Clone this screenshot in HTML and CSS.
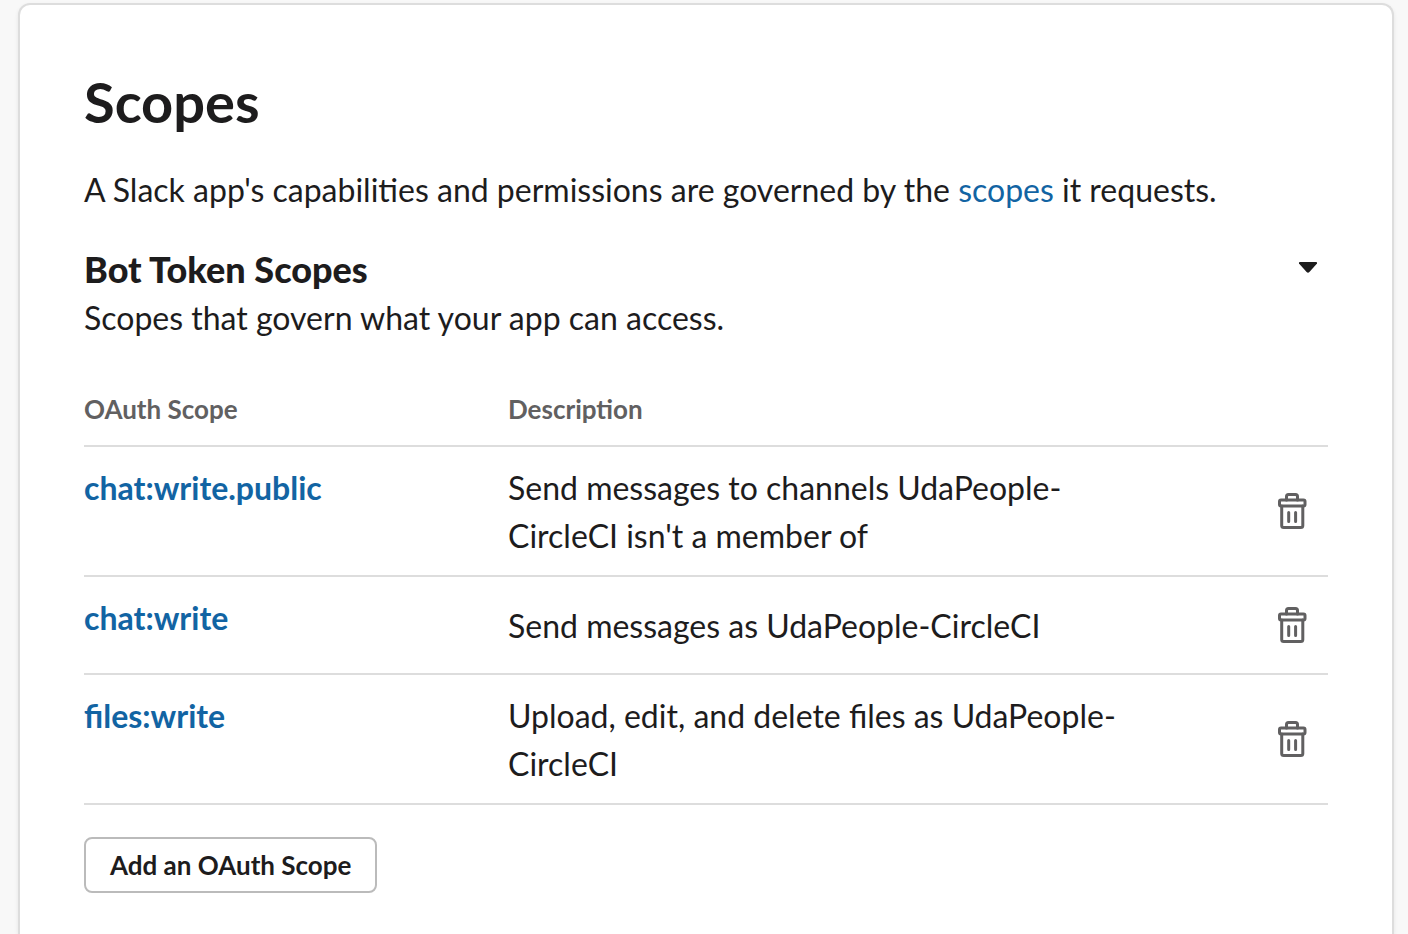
FILE: index.html
```html
<!DOCTYPE html>
<html lang="en">
<head>
<meta charset="utf-8">
<title>Scopes</title>
<link rel="stylesheet" href="styles.css">
</head>
<body>
<svg class="sprite" aria-hidden="true">
  <symbol id="trash" viewBox="0 0 32 38">
    <g fill="none" stroke="currentColor" stroke-width="3" stroke-linejoin="round" stroke-linecap="round">
      <path d="M10.500 8V4.500a2 2 0 0 1 2-2h7a2 2 0 0 1 2 2V8"/>
      <rect x="3.500" y="8" width="25.500" height="6" rx="1.500"/>
      <path d="M5.700 14V33.500a2 2 0 0 0 2 2H24.800a2 2 0 0 0 2-2V14"/>
      <path d="M12.700 20.500v9M19.600 20.500v9"/>
    </g>
  </symbol>
</svg>
<main class="card">
  <h1 class="title">Scopes</h1>
  <p class="intro">A Slack app's capabilities and permissions are governed by the <a href="#scopes">scopes</a> it requests.</p>
  <section>
    <div class="section-head">
      <h2 class="section-title">Bot Token Scopes</h2>
      <button class="toggle" type="button" aria-label="Collapse Bot Token Scopes">
        <svg width="20" height="12" viewBox="0 0 20 12"><path d="M1.800 0h16.400q1.300.1.800 1.600l-7.600 8.400q-1.400 1.300-2.800 0L1 1.600Q.5.100 1.800 0z" fill="currentColor"/></svg>
      </button>
    </div>
    <p class="section-text">Scopes that govern what your app can access.</p>
    <table class="scopes">
      <thead>
        <tr><th class="col-scope" scope="col">OAuth Scope</th><th scope="col">Description</th><td class="col-action"></td></tr>
      </thead>
      <tbody>
        <tr>
          <th scope="row"><a href="#chat-write-public">chat:write.public</a></th>
          <td>Send messages to channels UdaPeople-CircleCI isn't a member of</td>
          <td class="action"><button class="delete" type="button" aria-label="Delete chat:write.public"><svg><use href="#trash"/></svg></button></td>
        </tr>
        <tr>
          <th scope="row"><a href="#chat-write">chat:write</a></th>
          <td>Send messages as UdaPeople-CircleCI</td>
          <td class="action"><button class="delete" type="button" aria-label="Delete chat:write"><svg><use href="#trash"/></svg></button></td>
        </tr>
        <tr>
          <th scope="row"><a href="#files-write">files:write</a></th>
          <td>Upload, edit, and delete files as UdaPeople-CircleCI</td>
          <td class="action"><button class="delete" type="button" aria-label="Delete files:write"><svg><use href="#trash"/></svg></button></td>
        </tr>
      </tbody>
    </table>
    <button class="add" type="button">Add an OAuth Scope</button>
  </section>
</main>
</body>
</html>
```
FILE: styles.css
```css
* { box-sizing: border-box; }
html { height: 100%; }
body {
  display: flex;
  min-height: 100%;
  margin: 0;
  padding: 3px 14px 0 18px;
  background: #f8f8f8;
  color: #1d1c1d;
  font: 32px/48px Lato, sans-serif;
}
a { color: #1264a3; text-decoration: none; }
h1, h2, p { margin: 0; }
button { font: inherit; color: inherit; background: none; border: 0; padding: 0; cursor: pointer; }
.sprite { display: none; }
.card {
  flex: 1;
  padding: 63px 64px 40px;
  background: #fff;
  border: 2px solid #ddd;
  border-bottom: 0;
  border-radius: 12px 12px 0 0;
  box-shadow: 0 2px 4px rgba(0, 0, 0, 0.08);
}
.title { font-size: 56px; line-height: 68px; font-weight: 700; }
.intro { margin-top: 30px; }
.section-head { display: flex; align-items: center; justify-content: space-between; margin: 32px 0 2px; }
.section-title { font-size: 36px; line-height: 46px; font-weight: 900; }
.toggle { display: flex; padding: 12px 10px 14px; }
.scopes {
  width: 100%;
  margin-top: 33px;
  border-collapse: collapse;
  table-layout: fixed;
}
.scopes th, .scopes td {
  padding: 17px 0 15px;
  border-bottom: 2px solid #ddd;
  text-align: left;
  vertical-align: top;
}
.scopes thead th { padding: 16px 0 18px; font-size: 26px; line-height: 36px; color: #616061; }
.scopes .col-scope { width: 424px; }
.scopes .col-action { width: 196px; }
.scopes tbody td { vertical-align: middle; }
.scopes .action { text-align: right; }
.delete { padding: 12px 20px 14px; vertical-align: middle; color: #616061; line-height: 0; }
.delete svg { width: 32px; height: 38px; }
.add {
  margin-top: 32px;
  padding: 8px 24px;
  border: 2px solid #bbb;
  border-radius: 8px;
  background: #fff;
  font-size: 26px;
  line-height: 36px;
  font-weight: 700;
}
```
